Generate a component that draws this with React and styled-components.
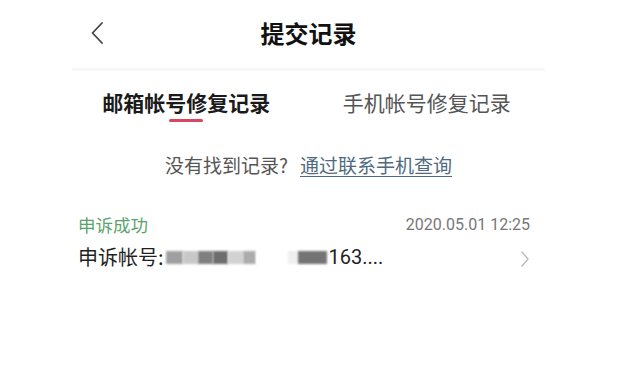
import React from "react";
import styled, { createGlobalStyle } from "styled-components";

const GlobalStyle = createGlobalStyle`
  html, body {
    margin: 0;
    padding: 0;
    background: #fff;
  }
  body {
    font-family: "Noto Sans CJK SC", "Noto Sans", sans-serif;
    color: #222;
  }
`;

const Page = styled.div`
  width: 473px;
  margin: 0 auto;
`;

const Header = styled.header`
  height: 68px;
  display: grid;
  grid-template-columns: 1fr auto 1fr;
  align-items: center;
  border-bottom: 3px solid #f7f7f7;
`;

const BackButton = styled.button`
  justify-self: start;
  display: flex;
  align-items: center;
  margin: 0 0 3px 18px;
  padding: 0;
  border: 0;
  background: none;
  color: #444;
  cursor: pointer;
`;

const Title = styled.h1`
  margin: 0 0 2px;
  font-size: 24px;
  line-height: 30px;
  font-weight: 700;
  color: #111;
`;

const Tabs = styled.nav`
  display: grid;
  grid-template-columns: 1fr 1fr;
  padding-top: 19px;
`;

const Tab = styled.div`
  display: flex;
  flex-direction: column;
  align-items: center;
  margin-left: ${props => (props.$active ? "-8px" : "0")};
  font-size: 21px;
  line-height: 24px;
  font-weight: ${props => (props.$active ? 700 : 400)};
  color: ${props => (props.$active ? "#1a1a1a" : "#555")};
`;

const Indicator = styled.span`
  width: 34px;
  height: 3px;
  margin-top: 5px;
  border-radius: 2px;
  background: ${props => (props.$show ? "#d9465f" : "transparent")};
`;

const Hint = styled.p`
  margin: 30px 0 0;
  text-align: center;
  font-size: 19px;
  line-height: 26px;
  color: #555;
`;

const HintLink = styled.a`
  margin-left: 12px;
  color: #4d6a80;
  text-decoration: underline;
  text-underline-offset: 3px;
  text-decoration-thickness: 1px;
`;

const Record = styled.div`
  margin-top: 35px;
  padding: 0 15px 0 6px;
`;

const RecordTop = styled.div`
  display: flex;
  justify-content: space-between;
  align-items: center;
  line-height: 24px;
`;

const Status = styled.span`
  font-size: 17.5px;
  color: #5aa36c;
`;

const Time = styled.span`
  font-family: "Roboto", "Noto Sans CJK SC", sans-serif;
  font-size: 16px;
  color: #777;
`;

const RecordBody = styled.div`
  display: flex;
  align-items: center;
  justify-content: space-between;
  margin-top: 6px;
  line-height: 28px;
`;

const Account = styled.div`
  display: flex;
  align-items: center;
  font-size: 20px;
  color: #1f1f1f;
`;

const Masked = styled.span`
  display: inline-flex;
  align-items: center;
  height: 28px;
  margin: 0 2px;
`;

const Pixel = styled.span`
  display: inline-block;
  width: ${props => props.$w}px;
  height: 13px;
  margin-top: 1px;
  background: ${props => props.$c};
  filter: blur(0.8px);
`;

const Tail = styled.span`
  font-family: "Roboto", "Noto Sans CJK SC", sans-serif;
  font-size: 20px;
`;

const Chevron = styled.span`
  display: flex;
  color: #bbb;
  margin-top: 4px;
`;

const blocks = [
  { w: 17, c: "#a0a0a0" },
  { w: 15, c: "#c8c8c8" },
  { w: 15, c: "#808080" },
  { w: 15, c: "#6e6e6e" },
  { w: 15, c: "#d2d2d2" },
  { w: 13, c: "#acacac" },
  { w: 32, c: "#fff" },
  { w: 10, c: "#efefef" },
  { w: 29, c: "#747474" }
];

const App = () => {
  return (
    <Page>
      <GlobalStyle />
      <Header>
        <BackButton aria-label="返回">
          <svg width="14" height="24" viewBox="0 0 14 24" fill="none">
            <path
              d="M12 2 L2.5 12 L12 22"
              stroke="currentColor"
              strokeWidth="1.8"
              strokeLinecap="round"
              strokeLinejoin="round"
            />
          </svg>
        </BackButton>
        <Title>提交记录</Title>
        <span />
      </Header>
      <Tabs>
        <Tab $active>
          邮箱帐号修复记录
          <Indicator $show />
        </Tab>
        <Tab>
          手机帐号修复记录
          <Indicator />
        </Tab>
      </Tabs>
      <Hint>
        没有找到记录?
        <HintLink>通过联系手机查询</HintLink>
      </Hint>
      <Record>
        <RecordTop>
          <Status>申诉成功</Status>
          <Time>2020.05.01 12:25</Time>
        </RecordTop>
        <RecordBody>
          <Account>
            申诉帐号:
            <Masked>
              {blocks.map((b, i) => (
                <Pixel key={i} $w={b.w} $c={b.c} />
              ))}
            </Masked>
            <Tail>163....</Tail>
          </Account>
          <Chevron>
            <svg width="10" height="18" viewBox="0 0 10 18" fill="none">
              <path
                d="M2 2 L8 9 L2 16"
                stroke="currentColor"
                strokeWidth="1.4"
                strokeLinecap="round"
                strokeLinejoin="round"
              />
            </svg>
          </Chevron>
        </RecordBody>
      </Record>
    </Page>
  );
};

export default App;
